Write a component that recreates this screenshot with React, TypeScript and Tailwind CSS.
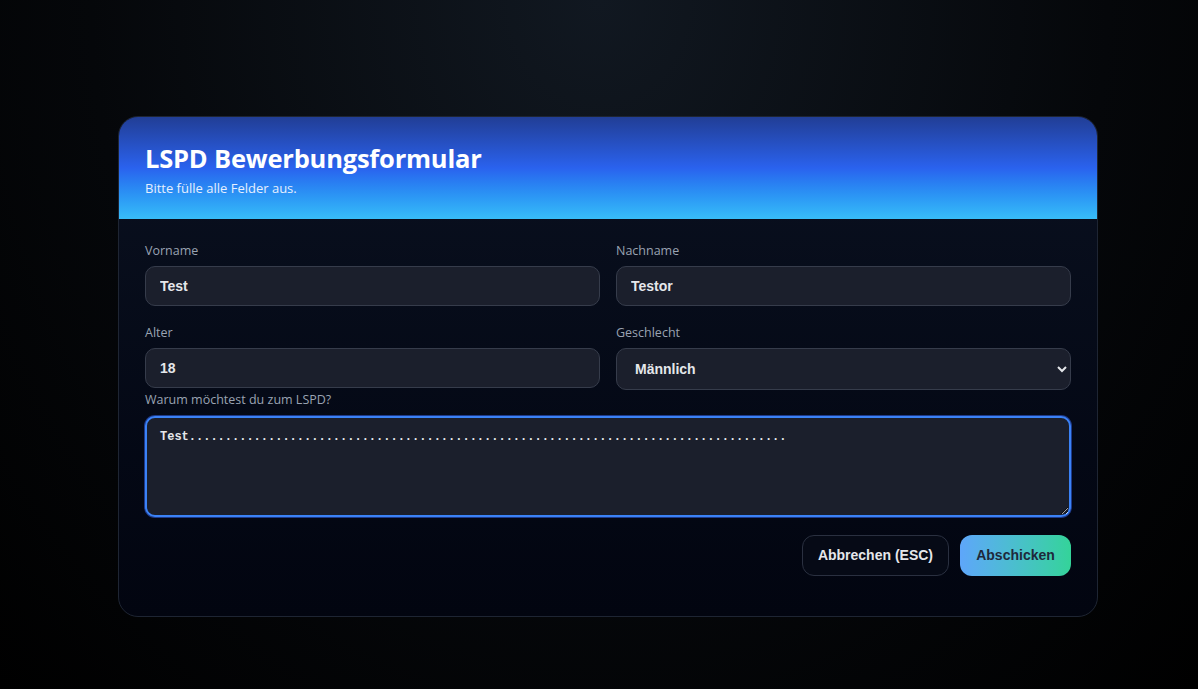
const dots = '.'.repeat(83)

export default function App() {
  return (
    <div className="min-h-[689px] w-full flex items-start justify-start pl-[118px] pt-[116px] bg-[radial-gradient(ellipse_at_50%_0%,#111821_0%,#05070a_60%,#000000_100%)]">
      <div className="w-[980px] h-[501px] rounded-[20px] border border-[#1e2533] overflow-hidden bg-gradient-to-b from-[#0b1120] to-[#020510] flex flex-col font-['Open_Sans',sans-serif]">
        {/* Header */}
        <div className="h-[102px] shrink-0 px-[26px] pt-[25px] bg-gradient-to-b from-[#213e96] via-[#2a62ee] to-[#38bdf8]">
          <h1 className="text-[25.5px] leading-[33px] font-bold text-white tracking-[-0.2px]">LSPD Bewerbungsformular</h1>
          <p className="text-[13px] leading-[18px] mt-[4px] text-[#e6efff]">Bitte fülle alle Felder aus.</p>
        </div>

        {/* Form body */}
        <div className="px-[26px] pt-[24px] flex flex-col">
          <div className="grid grid-cols-2 gap-x-[16px] gap-y-[19px]">
            <Field label="Vorname" value="Test" />
            <Field label="Nachname" value="Testor" />
            <Field label="Alter" value="18" />
            <div className="flex flex-col">
              <label className="text-[12.5px] leading-[16px] text-[#9aa3b2] mb-[7px]">Geschlecht</label>
              <select
                defaultValue="m"
                className="h-[42px] rounded-[10px] border border-[#363c4b] bg-[#1b1f2c] pl-[14px] pr-[8px] text-[14px] font-bold text-[#e5e7eb] font-['Liberation_Sans',sans-serif] outline-none"
              >
                <option value="m">Männlich</option>
                <option value="w">Weiblich</option>
              </select>
            </div>
          </div>

          <label className="text-[12.5px] leading-[16px] text-[#9aa3b2] mt-[2px] mb-[8px]">Warum möchtest du zum LSPD?</label>
          <textarea
            defaultValue={'Test' + dots}
            className="h-[101px] rounded-[10px] border-2 border-[#3b82f6] shadow-[0_0_0_1px_#1e3a8a] bg-[#1b1f2c] px-[13px] py-[11px] text-[12px] leading-[16px] font-bold text-[#e5e7eb] font-['Liberation_Mono',monospace] outline-none"
          />

          <div className="flex justify-end gap-[11px] mt-[18px]">
            <button className="h-[41px] px-[15px] rounded-[12px] border border-[#2a3040] bg-[#060a16] text-[14px] font-bold text-[#e5e7eb] font-['Liberation_Sans',sans-serif]">
              Abbrechen (ESC)
            </button>
            <button className="h-[41px] w-[111px] rounded-[12px] bg-gradient-to-r from-[#5ea6fa] to-[#34d399] text-[14px] font-bold text-[#1e293b] font-['Liberation_Sans',sans-serif]">
              Abschicken
            </button>
          </div>
        </div>
      </div>
    </div>
  )
}

function Field({ label, value }: { label: string; value: string }) {
  return (
    <div className="flex flex-col">
      <label className="text-[12.5px] leading-[16px] text-[#9aa3b2] mb-[7px]">{label}</label>
      <input
        defaultValue={value}
        className="h-[40px] rounded-[10px] border border-[#363c4b] bg-[#1b1f2c] px-[14px] text-[14px] font-bold text-[#e5e7eb] font-['Liberation_Sans',sans-serif] outline-none"
      />
    </div>
  )
}
